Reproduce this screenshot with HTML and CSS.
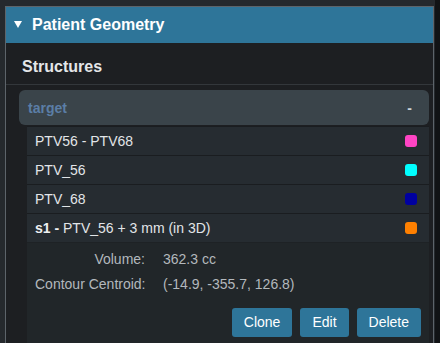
FILE: index.html
```html
<!DOCTYPE html>
<html lang="en">
<head>
	<meta charset="UTF-8">
	<title>Patient Geometry</title>
	<link rel="stylesheet" href="styles.css">
</head>
<body>
	<div class="wrap">
		<div class="panel">
			<div class="panel-head">
				<span class="caret"></span>
				<span class="panel-title">Patient Geometry</span>
			</div>
			<div class="panel-body">
				<div class="section-title">Structures</div>
				<div class="group">
					<div class="group-head">
						<span class="group-name">target</span>
						<span class="group-toggle">-</span>
					</div>
					<ul class="items">
						<li><span>PTV56 - PTV68</span><i class="swatch" style="background:#ff44c4"></i></li>
						<li><span>PTV_56</span><i class="swatch" style="background:#00ffff"></i></li>
						<li><span>PTV_68</span><i class="swatch" style="background:#0000a0"></i></li>
						<li><span><b>s1 -</b> PTV_56 + 3 mm (in 3D)</span><i class="swatch" style="background:#ff8000"></i></li>
					</ul>
					<div class="details">
						<div class="info">
							<span class="label">Volume:</span>
							<span class="value">362.3 cc</span>
							<span class="label">Contour Centroid:</span>
							<span class="value">(-14.9, -355.7, 126.8)</span>
						</div>
						<div class="actions">
							<a href="javascript:;" class="btn">Clone</a>
							<a href="javascript:;" class="btn">Edit</a>
							<a href="javascript:;" class="btn">Delete</a>
						</div>
					</div>
				</div>
			</div>
		</div>
	</div>
</body>
</html>
```

FILE: styles.css
```css
* {
	margin: 0;
	padding: 0;
	list-style: none;
	box-sizing: border-box;
}
body {
	background: #111315;
	font-family: "Liberation Sans", Arial, sans-serif;
	height: 343px;
	overflow: hidden;
}
.wrap {
	width: 435px;
	height: 343px;
	background: #25292d;
	padding: 6px 0 0 5px;
}
.panel {
	width: 429px;
	height: 337px;
	border: 1px solid #5d646a;
	border-bottom: 0;
	background: #1d1f22;
}
.panel-head {
	height: 36px;
	background: #2e7599;
	display: flex;
	align-items: center;
	padding-left: 8px;
	color: #fff;
}
.caret {
	width: 0;
	height: 0;
	border-left: 4px solid transparent;
	border-right: 4px solid transparent;
	border-top: 7px solid #fff;
	margin-right: 10px;
	margin-top: -1px;
}
.panel-title {
	font-size: 16px;
	font-weight: bold;
}
.panel-body {
	padding: 0 4px 0 13px;
	height: 300px;
	overflow: hidden;
}
.section-title {
	color: #e4e6e8;
	font-size: 16px;
	font-weight: bold;
	line-height: 20px;
	padding: 14px 0 7px 16px;
	margin: 0 -4px 0 -13px;
	border-bottom: 1px solid #33373b;
}
.group {
	margin-top: 5px;
}
.group-head {
	height: 35px;
	background: #3a444a;
	border-radius: 6px;
	display: flex;
	align-items: center;
	justify-content: space-between;
	padding: 0 17px 0 9px;
	font-size: 14px;
}
.group-name {
	color: #5b7ea6;
	font-weight: bold;
}
.group-toggle {
	color: #c9d2d8;
	font-weight: bold;
}
.items {
	margin: 1px 0 0 8px;
}
.items li {
	height: 29px;
	border-top: 1px solid #1a1d20;
	background: #262c31;
	display: flex;
	align-items: center;
	justify-content: space-between;
	padding: 0 12px 0 8px;
	color: #e2e5e8;
	font-size: 14px;
}
.items b {
	color: #eef0f2;
}
.swatch {
	width: 12px;
	height: 12px;
	border-radius: 3px;
}
.details {
	margin-left: 8px;
	background: #212629;
	border-top: 1px solid #1e2225;
	padding: 4px 8px 0 8px;
	height: 101px;
}
.info {
	display: grid;
	grid-template-columns: 110px auto;
	column-gap: 18px;
	font-size: 14px;
	line-height: 25px;
	color: #b3b8bd;
}
.label {
	text-align: right;
	white-space: nowrap;
}
.actions {
	display: flex;
	justify-content: flex-end;
	gap: 8px;
	margin-top: 11px;
}
.btn {
	display: block;
	height: 29px;
	line-height: 29px;
	padding: 0 12px;
	background: #2e7599;
	border-radius: 3px;
	color: #fff;
	font-size: 14px;
	text-decoration: none;
}
```
